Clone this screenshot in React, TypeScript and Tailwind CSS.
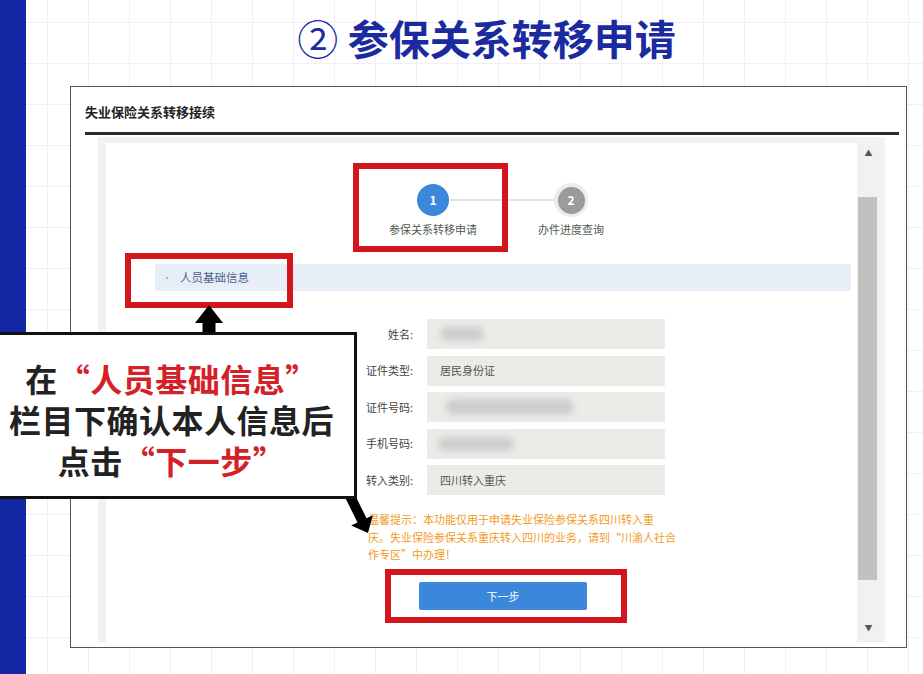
import React from "react";

const rows: { label: string; value?: string; blur?: { w: number; ml: number; h: number } }[] = [
  { label: "姓名:", blur: { w: 44, ml: 0, h: 14 } },
  { label: "证件类型:", value: "居民身份证" },
  { label: "证件号码:", blur: { w: 128, ml: 6, h: 16 } },
  { label: "手机号码:", blur: { w: 76, ml: -2, h: 14 } },
  { label: "转入类别:", value: "四川转入重庆" },
];

export default function App() {
  return (
    <div className="relative w-[923px] h-[674px] overflow-hidden bg-white flex font-['Noto_Sans_CJK_SC','Noto_Sans',sans-serif] bg-[linear-gradient(to_right,#eef0f5_1px,transparent_1px),linear-gradient(to_bottom,#eef0f5_1px,transparent_1px)] bg-[size:41px_41px] bg-[position:6px_22px]">
      {/* left blue bar */}
      <div className="w-[26px] h-full bg-[#1428a6] shrink-0" />

      <div className="flex-1 flex flex-col">
        <h1 className="pt-[15px] h-[86px] pl-[24px] text-center text-[41px] leading-[44px] font-bold text-[#1c2a9f]">
          <span className="font-normal">②</span> 参保关系转移申请
        </h1>

        {/* panel */}
        <div className="ml-[44px] w-[837px] h-[562px] border border-[#555] bg-white flex flex-col">
          <div className="h-[45px] pt-[5px] pl-[14px] flex items-center text-[13px] font-bold text-[#222]">
            失业保险关系转移接续
          </div>
          <div className="ml-[14px] mr-[7px] h-[3px] bg-[#2b2b2b]" />
          <div className="mt-[2px] ml-[27px] mr-[21px] mb-[5px] flex-1 bg-[#f2f2f4] pl-[8px] pt-[6px] pr-[5px] flex">
            {/* white content */}
            <div className="flex-1 bg-white flex flex-col">
              {/* steps */}
              <div className="pt-[40px] ml-[258px] relative flex">
                <div className="absolute top-[56px] left-[86px] w-[104px] h-[2px] bg-[#e4e4e4]" />
                <div className="w-[138px] flex flex-col items-center relative">
                  <div className="h-[34px] flex items-center">
                    <div className="w-[32px] h-[32px] rounded-full bg-[#3b87d9] text-white text-[12px] font-bold flex items-center justify-center">
                      1
                    </div>
                  </div>
                  <div className="mt-[4px] text-[11px] leading-[16px] text-[#4f5a4f]">参保关系转移申请</div>
                </div>
                <div className="w-[138px] flex flex-col items-center relative">
                  <div className="h-[34px] flex items-center">
                    <div className="w-[34px] h-[34px] rounded-full bg-[#ececec] flex items-center justify-center">
                      <div className="w-[27px] h-[27px] rounded-full bg-[#9b9b9b] text-white text-[12px] font-bold flex items-center justify-center">
                        2
                      </div>
                    </div>
                  </div>
                  <div className="mt-[4px] text-[11px] leading-[16px] text-[#4f5a4f]">办件进度查询</div>
                </div>
              </div>

              {/* section bar */}
              <div className="mt-[27px] ml-[49px] mr-[6px] h-[27px] bg-[#e8eef7] rounded-[2px] flex items-center pl-[7px] text-[11.5px] text-[#4c6488]">
                <span className="text-[#9aaccb] text-[10px] mr-[8px]">•</span>
                人员基础信息
              </div>

              {/* form */}
              <div className="mt-[28px] flex flex-col gap-[6.5px]">
                {rows.map((r) => (
                  <div key={r.label} className="flex items-center">
                    <div className="w-[307px] text-right text-[11px] text-[#444]">{r.label}</div>
                    <div className="ml-[14px] w-[238px] h-[30px] bg-[#ebebe8] flex items-center pl-[13px] text-[11px] text-[#555]">
                      {r.value}
                      {r.blur && (
                        <div
                          className="bg-[#cdcdcd] blur-[3px] rounded-full"
                          style={{ width: r.blur.w, height: r.blur.h, marginLeft: r.blur.ml }}
                        />
                      )}
                    </div>
                  </div>
                ))}
              </div>

              {/* warning */}
              <div className="mt-[16px] ml-[262px] w-[330px] text-[11px] leading-[17.5px] text-[#f29a1e] whitespace-nowrap">
                <div>温馨提示：本功能仅用于申请失业保险参保关系四川转入重</div>
                <div>庆。失业保险参保关系重庆转入四川的业务，请到“川渝人社合</div>
                <div>作专区”中办理！</div>
              </div>

              {/* button */}
              <div className="mt-[18.5px] ml-[313px] w-[168px] h-[28px] bg-[#3b87d9] rounded-[2px] text-white text-[11px] flex items-center justify-center">
                下一步
              </div>
            </div>

            {/* scrollbar */}
            <div className="w-[23px] bg-[#f1f1f1] flex flex-col">
              <div className="h-[20px] flex items-center justify-center text-[8px] text-[#555] leading-none">▲</div>
              <div className="mt-[34px] ml-[1px] w-[19px] h-[383px] bg-[#c1c1c1]" />
              <div className="flex-1" />
              <div className="h-[20px] mb-[4px] flex items-center justify-center text-[8px] text-[#555] leading-none">▼</div>
            </div>
          </div>
        </div>
      </div>

      {/* red annotation boxes */}
      <div className="absolute left-[353px] top-[163px] w-[155px] h-[89px] border-[6px] border-[#d3151d]" />
      <div className="absolute left-[125px] top-[253px] w-[168px] h-[55px] border-[6px] border-[#d3151d]" />
      <div className="absolute left-[385px] top-[569px] w-[242px] h-[54px] border-[6px] border-[#d3151d]" />

      {/* arrows */}
      <svg className="absolute left-[193px] top-[304px]" width="32" height="30" viewBox="0 0 32 30">
        <polygon points="16,1 30,19 22.5,19 22.5,30 9.5,30 9.5,19 2,19" fill="#000" />
      </svg>
      <svg className="absolute left-[335px] top-[485px]" width="45" height="55" viewBox="0 0 45 55">
        <polygon points="19.5,8.9 31.5,33.3 37.8,30.2 33,48 16.2,40.6 22.5,37.6 10.5,13.2" fill="#000" />
      </svg>

      {/* callout */}
      <div className="absolute left-[-4px] top-[332px] w-[361px] h-[167px] border-[3px] border-[#111] bg-white pt-[23px] pr-[10px] text-center text-[32px] leading-[41px] font-bold text-[#222] tracking-[0.5px]">
        <div>
          在<span className="text-[#d42127]">“人员基础信息”</span>
        </div>
        <div>栏目下确认本人信息后</div>
        <div>
          点击<span className="text-[#d42127]">“下一步”</span>
        </div>
      </div>
    </div>
  );
}
